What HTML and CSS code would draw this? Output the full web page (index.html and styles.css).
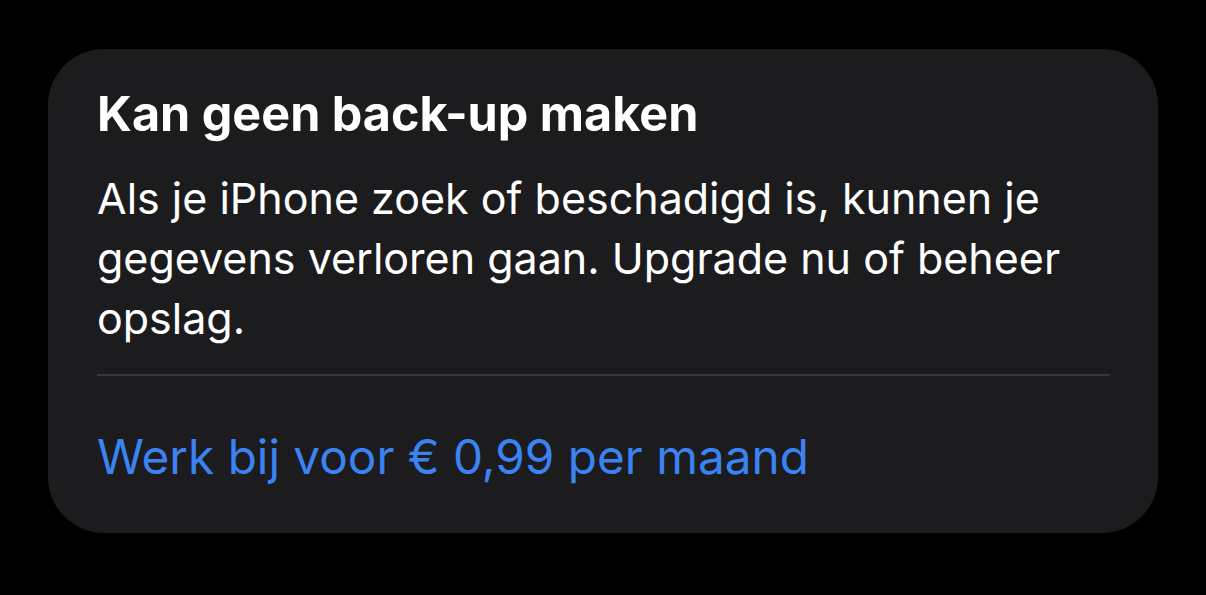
FILE: index.html
```html
<!DOCTYPE html>
<html lang="nl">
<head>
    <meta charset="UTF-8">
    <meta name="viewport" content="width=device-width, initial-scale=1.0">
    <title>Kan geen back-up maken</title>
    <link rel="stylesheet" href="styles.css">
</head>
<body>
    <div class="card">
        <h1 class="card-title">Kan geen back-up maken</h1>
        <p class="card-text">Als je iPhone zoek of beschadigd is, kunnen je gegevens verloren gaan. Upgrade nu of beheer opslag.</p>
        <div class="divider"></div>
        <a class="card-action" href="#">Werk bij voor € 0,99 per maand</a>
    </div>
</body>
</html>
```

FILE: styles.css
```css
body {
    margin: 0;
    background-color: #000;
    font-family: Inter, "Noto Sans", sans-serif;
    -webkit-font-smoothing: antialiased;
}
.card {
    box-sizing: border-box;
    width: 1110px;
    height: 484px;
    margin: 49px 0 0 48px;
    padding: 37px 48px 0 49px;
    background-color: #1c1c1e;
    border-radius: 56px;
}
.card-title {
    margin: 0;
    font-size: 48.5px;
    line-height: 56px;
    font-weight: 700;
    color: #fff;
}
.card-text {
    margin: 26px 0 0;
    font-size: 43px;
    line-height: 60px;
    font-weight: 400;
    color: #fff;
}
.divider {
    height: 2px;
    margin-top: 26px;
    background-color: #38383a;
}
.card-action {
    display: block;
    margin-top: 51px;
    font-size: 47.7px;
    line-height: 60px;
    color: #3b82f2;
    text-decoration: none;
}
```
